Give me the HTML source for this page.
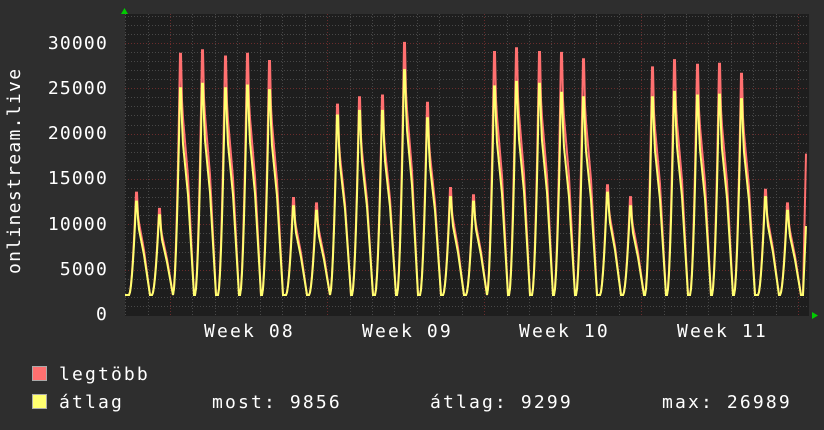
<!DOCTYPE html>
<html><head><meta charset="utf-8"><style>
body{margin:0;background:#2e2e2e;width:824px;height:430px;overflow:hidden;position:relative;font-family:"DejaVu Sans Mono","Liberation Mono",monospace;color:#fff}
.t{position:absolute;font-size:18px;line-height:18px;white-space:pre;letter-spacing:2.15px}
.y{right:716px;text-align:right;letter-spacing:1.2px}
.sq{position:absolute;width:13px;height:13px;border:1px solid #aaa}
</style></head><body>
<svg id="g" width="824" height="430" style="position:absolute;left:0;top:0"></svg>
<div class="t y" style="top:35px">30000</div>
<div class="t y" style="top:80px">25000</div>
<div class="t y" style="top:125px">20000</div>
<div class="t y" style="top:170px">15000</div>
<div class="t y" style="top:216px">10000</div>
<div class="t y" style="top:261px">5000</div>
<div class="t y" style="top:306px">0</div>
<div class="t" style="left:-80px;top:170px;transform:rotate(-90deg);width:190px;text-align:center;letter-spacing:1.3px">onlinestream.live</div>
<div class="t" style="left:204px;top:323px">Week 08</div>
<div class="t" style="left:362px;top:323px">Week 09</div>
<div class="t" style="left:519px;top:323px">Week 10</div>
<div class="t" style="left:677px;top:323px">Week 11</div>
<div class="sq" style="left:32px;top:366px;background:#ff7070"></div>
<div class="sq" style="left:32px;top:394px;background:#ffff70"></div>
<div class="t" style="left:59px;top:366px">legtöbb</div>
<div class="t" style="left:59px;top:394px">átlag</div>
<div class="t" style="left:212px;top:394px">most: 9856</div>
<div class="t" style="left:430px;top:394px">átlag: 9299</div>
<div class="t" style="left:662px;top:394px">max: 26989</div>
<script>
var s='',X0=125,X1=809,Y0=14,Y1=316;
function Y(v){return 315-v*0.00907;}
s+='<rect x="'+X0+'" y="'+Y0+'" width="'+(X1-X0)+'" height="'+(Y1-Y0)+'" fill="#1e1e1e"/>';
for(var v=1000;v<=33000;v+=1000){var yy=Math.round(Y(v))+.5;if(yy<Y0)break;var maj=v%5000==0;
s+='<line x1="'+X0+'" x2="'+X1+'" y1="'+yy+'" y2="'+yy+'" stroke="'+(maj?'#6a2c2c':'#484848')+'" stroke-dasharray="1,2"/>';}
for(var x=170-22.4*2;x<X1;x+=22.43){var xx=Math.round(x)+.5;if(xx<X0)continue;var maj=Math.abs(((x-170)/157)-Math.round((x-170)/157))<0.02;
s+='<line y1="'+Y0+'" y2="'+Y1+'" x1="'+xx+'" x2="'+xx+'" stroke="'+(maj?'#6a2c2c':'#484848')+'" stroke-dasharray="1,2"/>';}
var P=[[136,13.5,12.5],[159,11.7,11],[180,28.8,25],[202,29.2,25.5],[225,28.5,25],[247,28.8,25.3],[269,28,24.8],[293,12.9,12],[316,12.3,11.5],[337,23.2,22],[359,24,22.5],[382,24.2,22.5],[404,30,27],[427,23.4,21.7],[450,14,13],[473,13.2,12.5],[494,29,25.2],[516,29.4,25.7],[539,29,25.5],[561,28.9,24.5],[583,28.2,24],[607,14.3,13.5],[630,13,12],[652,27.3,24],[674,28.1,24.6],[697,27.6,24.2],[719,27.7,24.3],[741,26.6,23.8],[765,13.8,13],[787,12.3,11.5]];
function f(x,k){var best=2.2;for(var i=0;i<P.length;i++){var d=x-P[i][0],p=P[i][k],v;
if(d<-7||d>14)continue;
if(d<=0){var t=(d+7)/7;v=2.2+(p-2.2)*Math.pow(t,1.8);}
else if(d<=1){v=p;}
else if(d<=2){v=p*(k==1?0.82:0.85);}
else if(d<=8){v=p*(0.8-(d-2)*0.045);}
else{var t=(14-d)/6;v=2.2+(p*0.53-2.2)*t;}
if(v>best)best=v;}
if(x>=803){var t=(x-803)/3;best=2.2+((k==1?17.8:9.8)-2.2)*Math.min(1,t);}
return best*1000;}
function line(k,c){var pts=[];for(var x=X0;x<=806;x++)pts.push(x+','+Y(f(x,k)).toFixed(1));
return '<polyline points="'+pts.join(' ')+'" fill="none" stroke="'+c+'" stroke-width="2"/>';}
s+=line(1,'#ff7070');s+=line(2,'#ffff70');
s+='<polygon points="121,14 128,14 124.5,8" fill="#00cc00"/><polygon points="812,312 812,319 818,315.5" fill="#00cc00"/>';
document.getElementById('g').innerHTML=s;
</script>
</body></html>
